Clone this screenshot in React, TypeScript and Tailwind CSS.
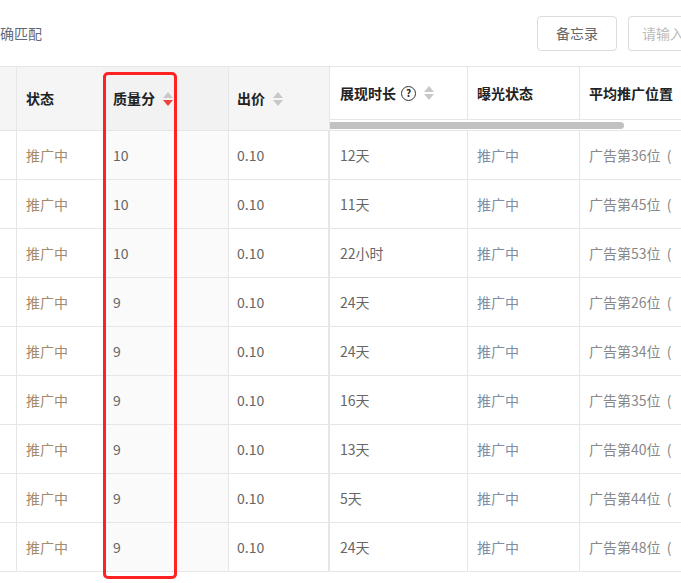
const rows = [
  ['10', '12天', '广告第36位'],
  ['10', '11天', '广告第45位'],
  ['10', '22小时', '广告第53位'],
  ['9', '24天', '广告第26位'],
  ['9', '24天', '广告第34位'],
  ['9', '16天', '广告第35位'],
  ['9', '13天', '广告第40位'],
  ['9', '5天', '广告第44位'],
  ['9', '24天', '广告第48位'],
];

function Sorter({ active = false }: { active?: boolean }) {
  return (
    <span className="ml-2 inline-flex flex-col gap-[2px]">
      <span className="h-0 w-0 border-x-[5px] border-b-[6px] border-x-transparent border-b-[#c8c8c8]" />
      <span
        className={`h-0 w-0 border-x-[5px] border-t-[6px] border-x-transparent ${active ? 'border-t-[#e8443a]' : 'border-t-[#c8c8c8]'}`}
      />
    </span>
  );
}

export default function App() {
  return (
    <div className="relative h-[583px] w-[681px] overflow-hidden bg-white text-[14px]" style={{ fontFamily: '"Noto Sans CJK SC", "Noto Sans", sans-serif' }}>
      <div className="flex h-[66px] items-center">
        <span className="text-[#5f6b7d]">确匹配</span>
        <div className="ml-auto flex gap-[11px] pt-0">
          <button className="h-[35px] w-[80px] rounded-[4px] border border-[#dcdcdc] text-[#666]">备忘录</button>
          <div className="flex h-[35px] w-[53px] items-center overflow-hidden whitespace-nowrap rounded-l-[4px] border border-r-0 border-[#dcdcdc] pl-[13px] text-[#bbb]">请输入</div>
        </div>
      </div>
      <div className="flex border-t border-[#e6e6e6]">
        <div className="flex w-[330px] shrink-0 flex-col">
          <div className="flex h-[64px] border-b border-[#e6e6e6] bg-[#f5f5f5] font-semibold text-[#222]">
            <div className="w-[17px] border-r border-[#e6e6e6]" />
            <div className="flex w-[86px] items-center pl-[9px]">状态</div>
            <div className="flex w-[126px] items-center border-r border-[#e6e6e6] bg-[#f2f2f2] pl-[10px]">质量分<Sorter active /></div>
            <div className="flex w-[101px] items-center border-r border-[#e6e6e6] pl-[8px]">出价<Sorter /></div>
          </div>
          {rows.map((r, i) => (
            <div key={i} className="flex h-[49px] border-b border-[#e6e6e6]">
              <div className="w-[17px] border-r border-[#e6e6e6]" />
              <div className="flex w-[86px] items-center pl-[9px] text-[#a38a6c]">推广中</div>
              <div className="flex w-[126px] items-center border-r border-[#e6e6e6] bg-[#fafafa] pl-[10px] text-[#666]">{r[0]}</div>
              <div className="flex w-[101px] items-center border-r-2 border-[#e6e6e6] pl-[8px] text-[#666]">0.10</div>
            </div>
          ))}
        </div>
        <div className="flex min-w-0 flex-1 flex-col">
          <div className="flex h-[53px] border-b border-[#e6e6e6] font-semibold text-[#222]">
            <div className="flex w-[138px] shrink-0 items-center border-r border-[#e6e6e6] pl-[10px]">
              展现时长
              <span className="ml-[5px] flex h-[15px] w-[15px] items-center justify-center rounded-full border-[1.5px] border-[#333] text-[10px] font-bold leading-none">?</span>
              <Sorter />
            </div>
            <div className="flex w-[112px] shrink-0 items-center border-r border-[#e6e6e6] pl-[9px]">曝光状态</div>
            <div className="flex shrink-0 items-center whitespace-nowrap pl-[9px]">平均推广位置</div>
          </div>
          <div className="flex h-[11px] items-center border-b border-[#e6e6e6]">
            <div className="h-[7px] w-[294px] rounded-r-full bg-[#c1c1c1]" />
          </div>
          {rows.map((r, i) => (
            <div key={i} className="flex h-[49px] border-b border-[#e6e6e6]">
              <div className="flex w-[138px] shrink-0 items-center border-r border-[#e6e6e6] pl-[10px] text-[#666]">{r[1]}</div>
              <div className="flex w-[112px] shrink-0 items-center border-r border-[#e6e6e6] pl-[9px] text-[#7d8ea6]">推广中</div>
              <div className="flex shrink-0 items-center whitespace-nowrap pl-[9px] text-[#888]">{r[2]}&nbsp;&nbsp;(</div>
            </div>
          ))}
        </div>
      </div>
      <div className="absolute left-[103px] top-[72px] h-[507px] w-[74px] rounded-[5px] border-[3px] border-[#f22]" />
    </div>
  );
}
